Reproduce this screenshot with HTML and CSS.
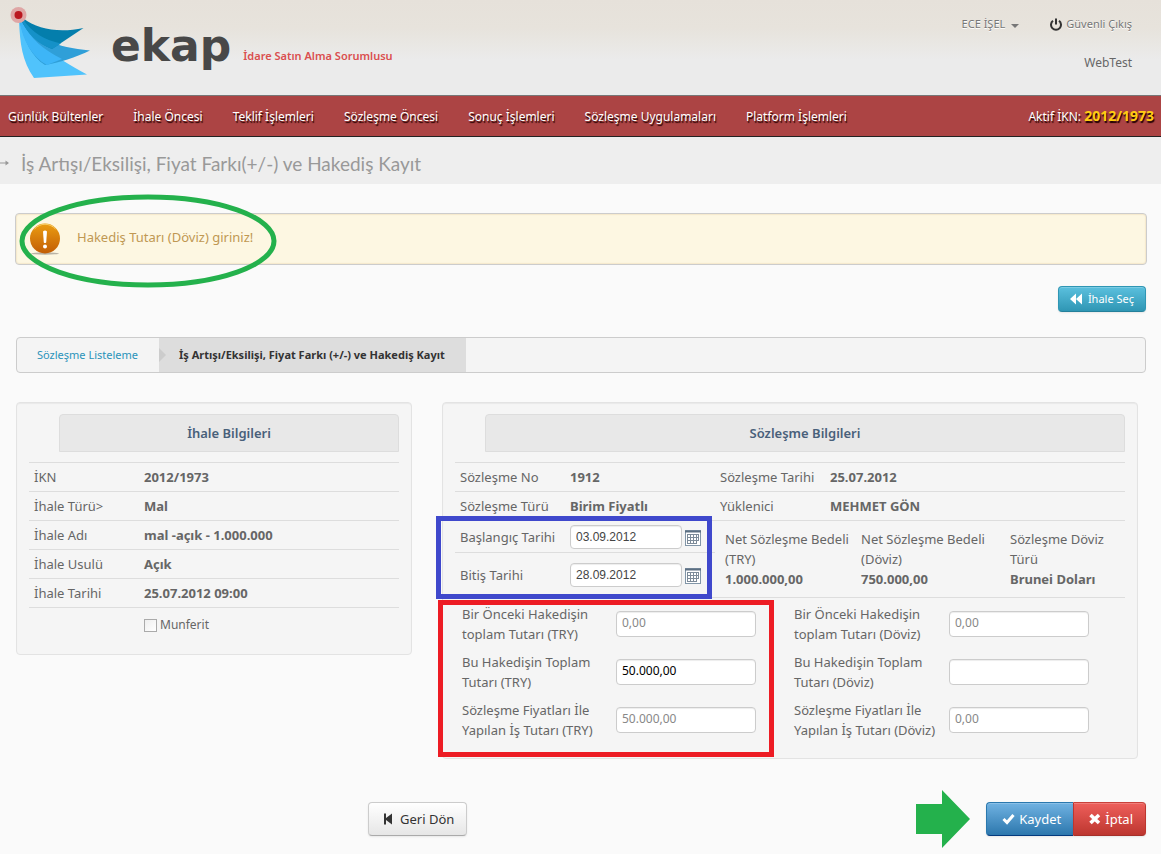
FILE: index.html
```html
<!DOCTYPE html>
<html lang="tr">
<head>
<meta charset="utf-8">
<title>EKAP - Hakediş Kayıt</title>
<link rel="stylesheet" href="styles.css">
</head>
<body>
<header class="top">
  <div class="brand">
    <svg class="brand-mark" width="82" height="74" viewBox="0 0 82 74" aria-hidden="true">
      <path d="M9 14C10 36 12 54 24 71L77 67.500C45 50 20 34 13 12Z" fill="#50c3fc"/>
      <path d="M9.500 13C14 34 22 50 35 58C49 56 66 50 80 43.500C46 40 24 32 13 11Z" fill="#2f9fd8"/>
      <path d="M9.500 14C13 34 22 50 37 58L52 52C34 43 20 32 12 14Z" fill="#3db5f7"/>
      <path d="M13 11C28 23 50 26 73.500 21L42 42C27 36 18 26 11 13Z" fill="#047eac"/>
      <path d="M11 13C18 27 26 36 42 42L51 36.500C35 33 22 26 13 12Z" fill="#1591c8"/>
      <circle cx="8.500" cy="8" r="8" fill="#dfa6a5"/>
      <circle cx="8.500" cy="8" r="4" fill="#ba1820"/>
    </svg>
    <span class="brand-name">ekap</span>
    <span class="brand-role">İdare Satın Alma Sorumlusu</span>
  </div>
  <div class="account">
    <div class="account-links">
      <a class="account-link" href="#">ECE İŞEL <span class="caret"></span></a>
      <a class="account-link" href="#">
        <svg width="12" height="13" viewBox="0 0 12 13" aria-hidden="true"><path d="M3 2.800A5 5 0 1 0 9 2.800M6 .500V6.500" fill="none" stroke="#333" stroke-width="2"/></svg>
        Güvenli Çıkış</a>
    </div>
    <div class="account-env">WebTest</div>
  </div>
</header>
<nav class="nav">
  <a href="#">Günlük Bültenler</a>
  <a href="#">İhale Öncesi</a>
  <a href="#">Teklif İşlemleri</a>
  <a href="#">Sözleşme Öncesi</a>
  <a href="#">Sonuç İşlemleri</a>
  <a href="#">Sözleşme Uygulamaları</a>
  <a href="#">Platform İşlemleri</a>
  <span class="nav-active">Aktif İKN: <strong>2012/1973</strong></span>
</nav>
<div class="page-title">
  <svg width="10" height="8" viewBox="0 0 10 8" aria-hidden="true"><path d="M0 4H8" stroke="#999"/><path d="M5.500 1.500L9 4L5.500 6.500Z" fill="#999"/></svg>
  <h1>İş Artışı/Eksilişi, Fiyat Farkı(+/-) ve Hakediş Kayıt</h1>
</div>
<main class="content">
  <div class="alert" role="alert">
    <svg width="32" height="32" viewBox="0 0 32 32" aria-hidden="true">
      <defs><linearGradient id="warn" x1="0" y1="0" x2="0" y2="1"><stop offset="0" stop-color="#eb9d12"/><stop offset="1" stop-color="#c25d04"/></linearGradient></defs>
      <ellipse cx="16" cy="30.500" rx="14" ry="1.200" fill="#b9b3a5"/>
      <circle cx="16" cy="15.500" r="15" fill="url(#warn)"/>
      <path d="M5.500 6A14 14 0 0 1 26.500 6" fill="none" stroke="#f6cf6a" stroke-width="1"/>
      <path d="M14 8.500Q16 6.500 18 8.500L17.200 19.500Q16 20.500 14.800 19.500Z" fill="#fff"/>
      <circle cx="16" cy="23.500" r="2" fill="#fff"/>
    </svg>
    <span>Hakediş Tutarı (Döviz) giriniz!</span>
    <svg class="mark-ellipse" width="260" height="94" viewBox="0 0 260 94" aria-hidden="true"><ellipse cx="130" cy="47" rx="126" ry="44" fill="none" stroke="#24b14c" stroke-width="5"/></svg>
  </div>
  <div class="toolbar">
    <button class="btn btn-info" type="button">
      <svg width="12" height="12" viewBox="0 0 12 12" aria-hidden="true"><path d="M6 .500V11.500L0 6ZM12 .500V11.500L6 6Z" fill="#fff"/></svg>
      İhale Seç</button>
  </div>
  <nav class="crumbs">
    <a class="crumb" href="#">Sözleşme Listeleme</a>
    <span class="crumb crumb-current">İş Artışı/Eksilişi, Fiyat Farkı (+/-) ve Hakediş Kayıt</span>
  </nav>
  <div class="cards">
    <section class="card">
      <h2 class="card-title">İhale Bilgileri</h2>
      <table class="info">
        <tr><th scope="row">İKN</th><td>2012/1973</td></tr>
        <tr><th scope="row">İhale Türü&gt;</th><td>Mal</td></tr>
        <tr><th scope="row">İhale Adı</th><td>mal -açık - 1.000.000</td></tr>
        <tr><th scope="row">İhale Usulü</th><td>Açık</td></tr>
        <tr><th scope="row">İhale Tarihi</th><td>25.07.2012 09:00</td></tr>
      </table>
      <div class="check"><input type="checkbox" id="munferit"><label for="munferit">Munferit</label></div>
    </section>
    <section class="card">
      <h2 class="card-title">Sözleşme Bilgileri</h2>
      <table class="info info-wide">
        <tr><th scope="row">Sözleşme No</th><td>1912</td><th scope="row">Sözleşme Tarihi</th><td>25.07.2012</td></tr>
        <tr><th scope="row">Sözleşme Türü</th><td>Birim Fiyatlı</td><th scope="row">Yüklenici</th><td>MEHMET GÖN</td></tr>
      </table>
      <div class="terms">
        <div class="dates">
          <div class="date-row">
            <label for="start">Başlangıç Tarihi</label>
            <input class="field" id="start" type="text" value="03.09.2012">
            <button class="calendar" type="button" aria-label="Başlangıç Tarihi seç"><svg width="16" height="16" viewBox="0 0 16 16" aria-hidden="true"><rect x=".5" y=".5" width="15" height="15" fill="#fff" stroke="#8296a8"/><path d="M0 1.500H16" stroke="#5c6f82" stroke-width="2"/><path d="M2 4.500H14M2 7.500H14M2 10.500H14M2 13.500H11M2.500 4V14M5.500 4V14M8.500 4V14M11.500 4V14M13.500 4V11" stroke="#7d8b99" fill="none"/></svg></button>
          </div>
          <div class="date-row date-row-last">
            <label for="end">Bitiş Tarihi</label>
            <input class="field" id="end" type="text" value="28.09.2012">
            <button class="calendar" type="button" aria-label="Bitiş Tarihi seç"><svg width="16" height="16" viewBox="0 0 16 16" aria-hidden="true"><rect x=".5" y=".5" width="15" height="15" fill="#fff" stroke="#8296a8"/><path d="M0 1.500H16" stroke="#5c6f82" stroke-width="2"/><path d="M2 4.500H14M2 7.500H14M2 10.500H14M2 13.500H11M2.500 4V14M5.500 4V14M8.500 4V14M11.500 4V14M13.500 4V11" stroke="#7d8b99" fill="none"/></svg></button>
          </div>
          <div class="mark mark-blue"></div>
        </div>
        <dl class="prices">
          <div><dt>Net Sözleşme Bedeli<br>(TRY)</dt><dd>1.000.000,00</dd></div>
          <div><dt>Net Sözleşme Bedeli<br>(Döviz)</dt><dd>750.000,00</dd></div>
          <div><dt>Sözleşme Döviz<br>Türü</dt><dd>Brunei Doları</dd></div>
        </dl>
      </div>
      <div class="amounts">
        <div class="amount-col">
          <label for="a1">Bir Önceki Hakedişin<br>toplam Tutarı (TRY)</label><input class="field" id="a1" type="text" value="0,00" disabled>
          <label for="a2">Bu Hakedişin Toplam<br>Tutarı (TRY)</label><input class="field" id="a2" type="text" value="50.000,00">
          <label for="a3">Sözleşme Fiyatları İle<br>Yapılan İş Tutarı (TRY)</label><input class="field" id="a3" type="text" value="50.000,00" disabled>
          <div class="mark mark-red"></div>
        </div>
        <div class="amount-col">
          <label for="b1">Bir Önceki Hakedişin<br>toplam Tutarı (Döviz)</label><input class="field" id="b1" type="text" value="0,00" disabled>
          <label for="b2">Bu Hakedişin Toplam<br>Tutarı (Döviz)</label><input class="field" id="b2" type="text" value="">
          <label for="b3">Sözleşme Fiyatları İle<br>Yapılan İş Tutarı (Döviz)</label><input class="field" id="b3" type="text" value="0,00" disabled>
        </div>
      </div>
    </section>
  </div>
  <div class="actions">
    <button class="btn btn-large btn-back" type="button">
      <svg width="8" height="12" viewBox="0 0 8 12" aria-hidden="true"><path d="M0 .500H2V5L8 .500V11.500L2 7V11.500H0Z" fill="#333"/></svg>
      Geri Dön</button>
    <div class="submit">
      <svg width="54" height="58" viewBox="0 0 54 58" aria-hidden="true"><path d="M0 14H26V0L54 29L26 58V44H0Z" fill="#24b14c"/></svg>
      <div class="btn-group">
        <button class="btn btn-large btn-primary" type="button">
          <svg width="13" height="12" viewBox="0 0 13 12" aria-hidden="true"><path d="M1.500 6L5 9.500L11.500 2" fill="none" stroke="#fff" stroke-width="3"/></svg>
          Kaydet</button>
        <button class="btn btn-large btn-danger" type="button">
          <svg width="12" height="12" viewBox="0 0 12 12" aria-hidden="true"><path d="M1.500 2L10 10M10 2L1.500 10" stroke="#fff" stroke-width="3.600"/></svg>
          İptal</button>
      </div>
    </div>
  </div>
</main>
</body>
</html>
```

FILE: styles.css
```css
* { box-sizing: border-box; }
body {
  margin: 0;
  background: #fafafa;
  color: #666;
  font: 13px/20px "Noto Sans", "Open Sans", sans-serif;
}
a { color: inherit; text-decoration: none; }
button, input { font: inherit; }

.top {
  display: flex;
  justify-content: space-between;
  height: 95px;
  background: linear-gradient(#e6e1da 0, #e7e3dc 28px, #ebebeb 60px);
}
.brand { display: flex; padding: 7px 0 0 10px; }
.brand-name {
  margin: 8px 0 0 19px;
  color: #484848;
  font: 44px/62px "DejaVu Sans", sans-serif;
  font-weight: 700;
}
.brand-role {
  margin: 39px 0 0 12px;
  color: #da4f4f;
  font-size: 11px;
  font-weight: 600;
}
.account { padding: 14px 29px 0 0; font-size: 11px; text-align: right; color: #777; }
.account-links { display: flex; gap: 31px; }
.account-link { display: flex; align-items: center; gap: 4px; text-shadow: 0 1px 0 #fff; }
.account-env { margin-top: 19px; color: #666; font-size: 12px; }
.caret {
  margin: 4px 0 0 2px;
  border: 4px solid transparent;
  border-top-color: #777;
  border-bottom: 0;
}

.nav {
  display: flex;
  flex-wrap: wrap;
  align-items: center;
  gap: 0 30px;
  min-height: 42px;
  padding: 1px 7px 0 8px;
  border-top: 1px solid #777;
  border-bottom: 1px solid #222;
  background: #ac4444;
  color: #fff;
  font-size: 12px;
  text-shadow: 1px 2px 1px #200;
}
.nav-active { margin-left: auto; }
.nav-active strong { color: #fc1; font-size: 14px; }

.page-title {
  display: flex;
  align-items: center;
  gap: 11px;
  min-height: 47px;
  background: #eee;
}
.page-title svg { margin-top: 4px; }
.page-title h1 {
  margin: 6px 0 0;
  color: #999;
  font: 19px/32px Lato, "Open Sans", sans-serif;
}

.content { padding: 29px 14px 0 15px; }
.alert {
  position: relative;
  display: flex;
  align-items: center;
  gap: 16px;
  min-height: 52px;
  padding: 0 13px;
  border: 1px solid #ccc;
  border-radius: 4px;
  background: #fdf7e2;
  box-shadow: inset 0 0 1px 1px #f6e8cc;
  color: #c09853;
}
.alert span { padding-bottom: 4px; }
.mark-ellipse { position: absolute; left: 2px; top: -20px; }

.toolbar { display: flex; justify-content: flex-end; margin: 21px 1px 0 0; }
.btn {
  display: inline-flex;
  align-items: center;
  justify-content: center;
  gap: 6px;
  height: 26px;
  padding: 0 11px;
  border: 1px solid #ccc;
  border-bottom-color: #aaa;
  border-radius: 4px;
  background: linear-gradient(#fff, #e6e6e6);
  box-shadow: inset 0 1px 0 rgba(255, 255, 255, .2), 0 1px 2px rgba(0, 0, 0, .08);
  color: #333;
  font-size: 11px;
}
.btn-info {
  border-color: #2f96b4 #2f96b4 #24809b;
  background: linear-gradient(#5bc0de, #2f96b4);
  color: #fff;
}
.btn-large { height: 34px; padding: 0 12px 0 15px; font-size: 13px; }
.btn-back { gap: 8px; }
.btn-primary { border-color: #2a78ae #2a78ae #033a7e; background: linear-gradient(#70b2e2, #2c77ad); color: #fff; }
.btn-danger { border-color: #c9403a #bd362f #a5302a; background: linear-gradient(#ee5f5b, #bd362f); color: #fff; }
.btn-group { display: flex; }
.btn-group .btn-primary { border-right: 0; border-radius: 4px 0 0 4px; gap: 4px; }
.btn-group .btn-danger { border-radius: 0 4px 4px 0; gap: 4px; }

.crumbs {
  display: flex;
  margin: 25px 1px 0;
  border: 1px solid #ccc;
  border-radius: 4px;
  background: #f4f4f4;
  font-size: 11px;
}
.crumb { padding: 7px 21px 7px 20px; color: #2a93ba; }
.crumb-current {
  position: relative;
  background: #ddd;
  color: #333;
  font-weight: 700;
}
.crumb-current::before {
  content: "";
  position: absolute;
  left: 0;
  top: 10px;
  border: 7px solid transparent;
  border-left-color: #ccc;
  border-right: 0;
}

.cards {
  display: grid;
  grid-template-columns: 396fr 696fr;
  align-items: start;
  gap: 30px;
  margin: 29px 9px 0 1px;
}
.card {
  padding: 11px 12px 0;
  border: 1px solid #e3e3e3;
  border-radius: 4px;
  background: #f5f5f5;
  box-shadow: inset 0 1px 1px rgba(0, 0, 0, .05);
}
.card-title {
  margin: 0 0 10px 30px;
  padding: 8px;
  border: 1px solid #ddd;
  border-radius: 4px 4px 0 0;
  background: #e8e8e8;
  color: #48607a;
  font-size: 13px;
  font-weight: 600;
  text-align: center;
}
.info { width: 100%; border-collapse: collapse; table-layout: fixed; }
.info tr { border-top: 1px solid #ddd; border-bottom: 1px solid #ddd; }
.info th { width: 110px; padding: 4px 0 4px 5px; font-weight: 400; text-align: left; white-space: nowrap; }
.info td { padding: 4px 5px; font-weight: 700; }
.info-wide td:nth-child(2) { width: 150px; }

.check {
  display: flex;
  align-items: center;
  gap: 3px;
  padding: 7px 0 19px 115px;
  font-size: 12px;
}
.check input {
  width: 13px;
  height: 13px;
  margin: 0;
  border: 1px solid #aaa;
  background: linear-gradient(135deg, #eee, #fff);
  appearance: none;
}

.terms { display: flex; border-bottom: 1px solid #ddd; }
.dates { position: relative; width: 260px; }
.date-row {
  display: grid;
  grid-template-columns: 110px 112px 19px;
  align-items: center;
  padding: 4px 0 3px 5px;
  border-bottom: 1px solid #ddd;
}
.date-row-last { padding: 10px 0 10px 5px; border-bottom: 0; }
.calendar { display: flex; margin: 1px 0 0 3px; padding: 0; border: 0; background: none; }
.field {
  width: 140px;
  height: 26px;
  padding: 0 5px 4px;
  border: 1px solid #ccc;
  border-radius: 4px;
  background: #fff;
  box-shadow: inset 0 1px 1px rgba(0, 0, 0, .075);
  color: #000;
  font-size: 12px;
}
.field:disabled { color: #888; }
.date-row .field {
  width: 112px;
  height: 24px;
  padding-bottom: 0;
  color: #444;
  font-family: "Liberation Sans", sans-serif;
}
.prices {
  display: grid;
  grid-template-columns: 136fr 149fr 115fr;
  flex: 1;
  margin: 0;
  padding: 8px 0 8px 10px;
  white-space: nowrap;
}
.prices dd { margin: 0; font-weight: 700; }

.amounts { display: grid; grid-template-columns: 332fr 338fr; padding: 4px 0 12px; }
.amount-col {
  position: relative;
  display: grid;
  grid-template-columns: 154px 140px;
  grid-auto-rows: 48px;
  padding-left: 7px;
  white-space: nowrap;
}
.amount-col .field { margin-top: 9px; }
.amount-col:nth-child(2) { grid-template-columns: 155px 140px; }
.amount-col label { padding-top: 2px; }

.mark { position: absolute; pointer-events: none; }
.mark-blue { inset: -5px 3px -2px -19px; border: 5px solid #3f48cc; }
.mark-red { inset: -2px 13px -11px -17px; border: 5px solid #ed1c24; }

.actions {
  display: flex;
  align-items: center;
  justify-content: space-between;
  margin: 31px 1px 0 353px;
}
.submit { display: flex; align-items: center; gap: 16px; }
```
